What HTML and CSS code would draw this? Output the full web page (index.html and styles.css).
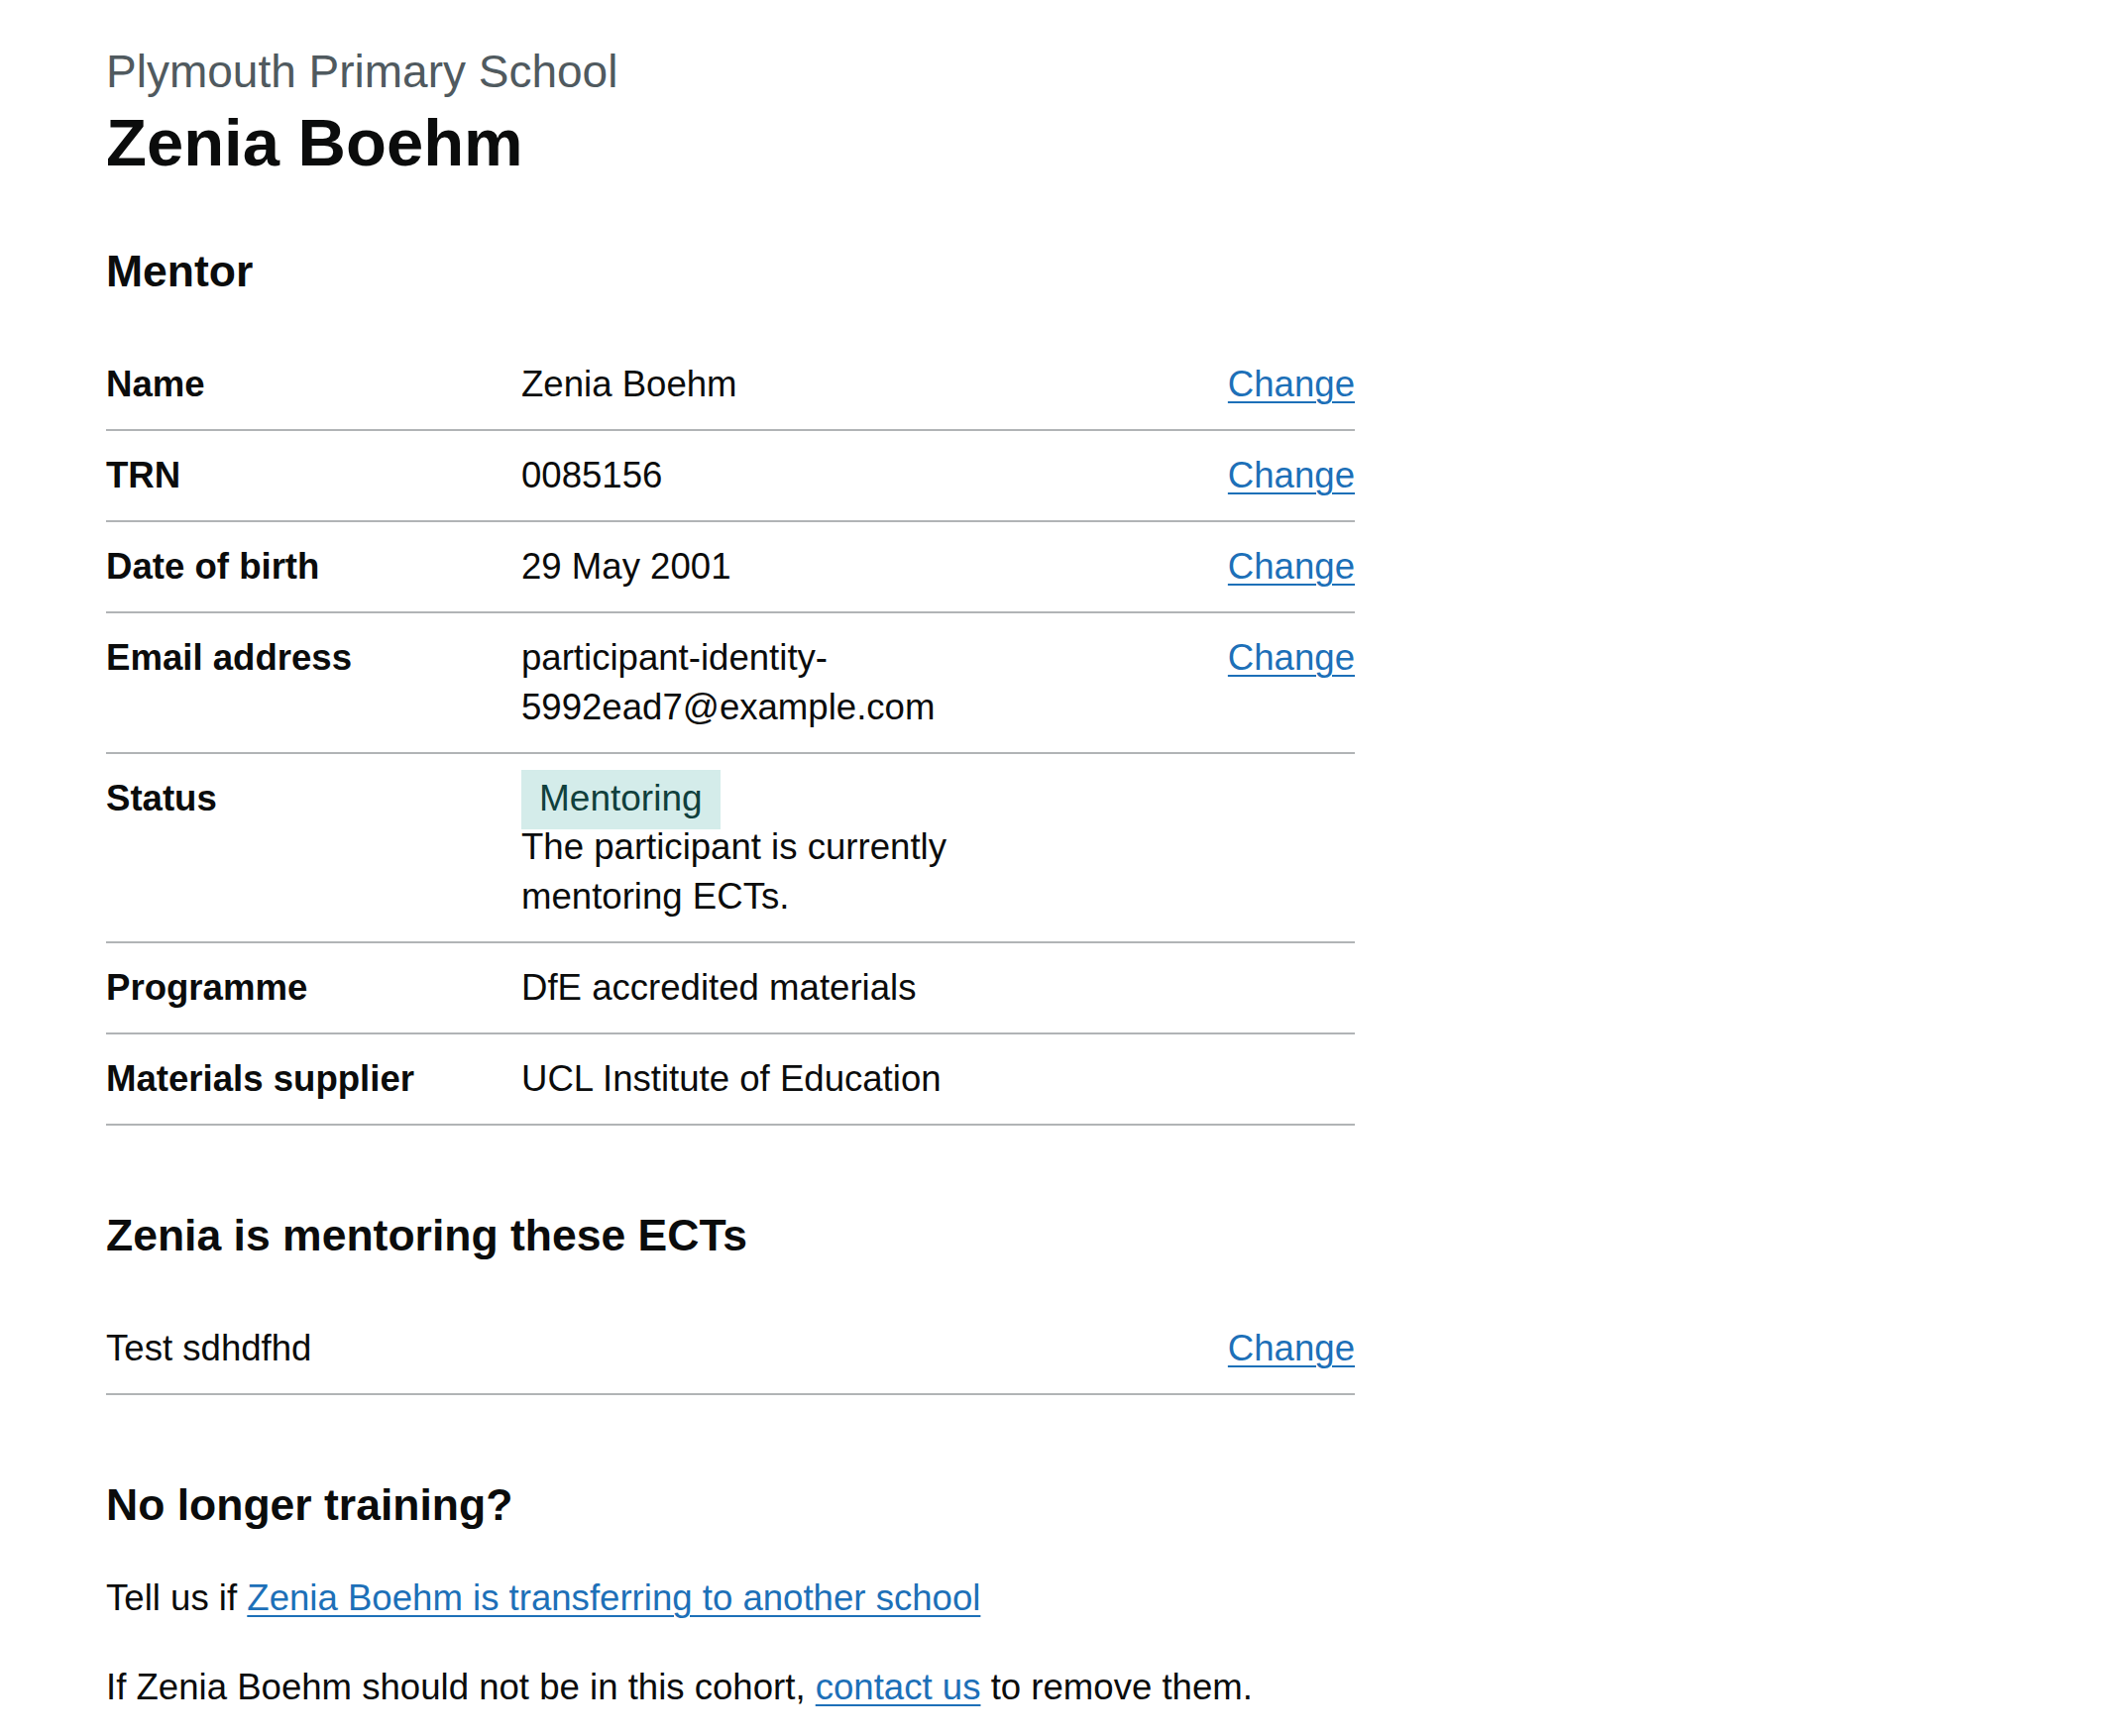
FILE: index.html
```html
<!DOCTYPE html>
<html lang="en">
<head>
<meta charset="utf-8">
<title>Zenia Boehm - Plymouth Primary School</title>
<link rel="stylesheet" href="styles.css">
</head>
<body>
<div class="width-container">
  <main class="main">
    <div class="column">
      <span class="caption">Plymouth Primary School</span>
      <h1 class="heading-l">Zenia Boehm</h1>

      <h2 class="heading-m">Mentor</h2>
      <dl class="summary-list">
        <div class="row">
          <dt class="key">Name</dt>
          <dd class="value">Zenia Boehm</dd>
          <dd class="actions"><a class="link" href="#">Change</a></dd>
        </div>
        <div class="row">
          <dt class="key">TRN</dt>
          <dd class="value">0085156</dd>
          <dd class="actions"><a class="link" href="#">Change</a></dd>
        </div>
        <div class="row">
          <dt class="key">Date of birth</dt>
          <dd class="value">29 May 2001</dd>
          <dd class="actions"><a class="link" href="#">Change</a></dd>
        </div>
        <div class="row">
          <dt class="key">Email address</dt>
          <dd class="value">participant-identity-5992ead7@example.com</dd>
          <dd class="actions"><a class="link" href="#">Change</a></dd>
        </div>
        <div class="row">
          <dt class="key">Status</dt>
          <dd class="value">
            <div class="tag-wrap"><strong class="tag tag-turquoise">Mentoring</strong></div>
            <p class="status-hint">The participant is currently mentoring ECTs.</p>
          </dd>
          <dd class="actions"></dd>
        </div>
        <div class="row">
          <dt class="key">Programme</dt>
          <dd class="value">DfE accredited materials</dd>
          <dd class="actions"></dd>
        </div>
        <div class="row">
          <dt class="key">Materials supplier</dt>
          <dd class="value">UCL Institute of Education</dd>
          <dd class="actions"></dd>
        </div>
      </dl>

      <h2 class="heading-m">Zenia is mentoring these ECTs</h2>
      <dl class="summary-list">
        <div class="row row-simple">
          <dt class="plain-key">Test sdhdfhd</dt>
          <dd class="actions"><a class="link" href="#">Change</a></dd>
        </div>
      </dl>

      <h2 class="heading-m">No longer training?</h2>
      <p class="body">Tell us if <a class="link" href="#">Zenia Boehm is transferring to another school</a></p>
      <p class="body">If Zenia Boehm should not be in this cohort, <a class="link" href="#">contact us</a> to remove them.</p>
    </div>
  </main>
</div>
</body>
</html>
```

FILE: styles.css
```css
* {
  box-sizing: border-box;
}

html, body {
  margin: 0;
  padding: 0;
  background: #ffffff;
}

body {
  font-family: "Liberation Sans", Arial, sans-serif;
  color: #0b0c0c;
  font-size: 36.6px;
  line-height: 50px;
}

.width-container {
  max-width: 1920px;
  margin: 0 auto;
}

.main {
  padding-top: 47px;
  padding-bottom: 40px;
}

.column {
  width: 1260px;
}

.caption {
  display: block;
  font-size: 46px;
  line-height: 50px;
  color: #505a5f;
  margin-bottom: 7px;
}

.heading-l {
  margin: 0 0 65px;
  font-size: 67px;
  line-height: 80px;
  font-weight: 700;
}

.heading-m {
  margin: 0 0 44px;
  font-size: 44.5px;
  line-height: 50px;
  font-weight: 700;
}

.summary-list {
  margin: 0 0 86px;
  padding: 0;
}

.row {
  display: grid;
  grid-template-columns: 419px 1fr 252px;
  border-bottom: 2px solid #b1b4b6;
}

.row-simple {
  grid-template-columns: 1fr 252px;
}

.key,
.value,
.actions,
.plain-key {
  margin: 0;
  padding: 20px 40px 20px 0;
}

.key {
  font-weight: 700;
}

.actions {
  padding-right: 0;
  text-align: right;
}

.link {
  color: #1d70b8;
  text-decoration: underline;
  text-decoration-thickness: 2px;
  text-underline-offset: 5px;
}

.tag-wrap {
  margin-top: -4px;
}

.tag {
  display: inline-block;
  padding: 4px 18px 6px;
  font-weight: 400;
  font-size: 37px;
  line-height: 50px;
}

.tag-turquoise {
  background: #d4ecea;
  color: #10403c;
}

.status-hint {
  margin: -7px 0 0;
}

.body {
  margin: 0 0 40px;
}
```
